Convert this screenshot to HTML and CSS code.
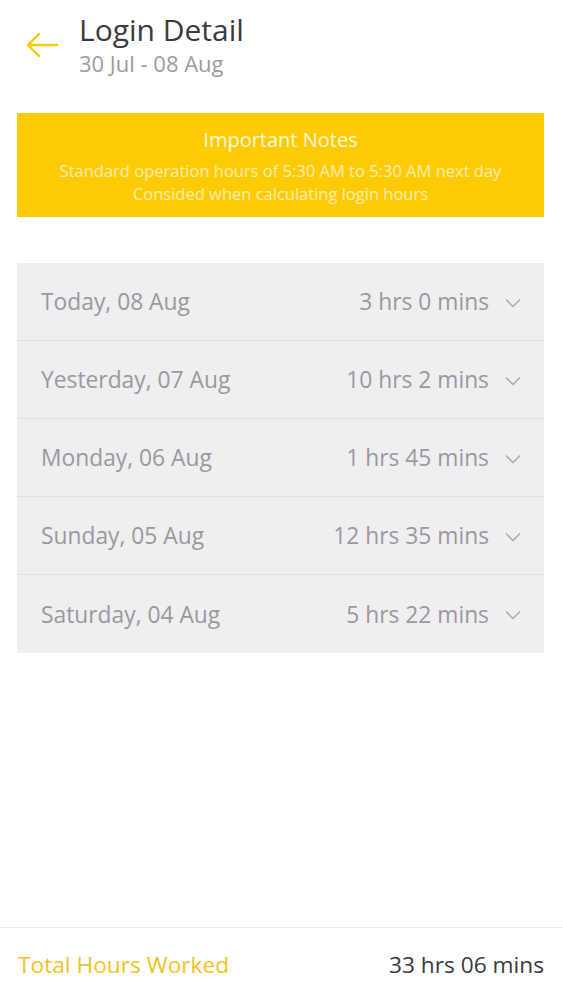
FILE: index.html
```html
<!DOCTYPE html>
<html>
<head>
<meta charset="utf-8">
<link rel="stylesheet" href="styles.css">
</head>
<body>
<div class="page">
  <header class="header">
    <svg class="back" width="32" height="26" viewBox="0 0 32 26">
      <path d="M31 13H2M13 2L2 13l11 11" fill="none" stroke="#f7c90e" stroke-width="2.4" stroke-linecap="round" stroke-linejoin="round"/>
    </svg>
    <div class="titles">
      <div class="title">Login Detail</div>
      <div class="subtitle">30 Jul - 08 Aug</div>
    </div>
  </header>

  <section class="notes">
    <div class="notes-title">Important Notes</div>
    <div class="notes-text">Standard operation hours of 5:30 AM to 5:30 AM next day</div>
    <div class="notes-text">Consided when calculating login hours</div>
  </section>

  <ul class="list">
    <li class="row"><span class="day">Today, 08 Aug</span><span class="hours">3 hrs 0 mins</span><svg class="chev" width="16" height="10" viewBox="0 0 16 10"><path d="M1 1.5l7 7 7-7" fill="none" stroke="#a8a7ab" stroke-width="1.4"/></svg></li>
    <li class="row"><span class="day">Yesterday, 07 Aug</span><span class="hours">10 hrs 2 mins</span><svg class="chev" width="16" height="10" viewBox="0 0 16 10"><path d="M1 1.5l7 7 7-7" fill="none" stroke="#a8a7ab" stroke-width="1.4"/></svg></li>
    <li class="row"><span class="day">Monday, 06 Aug</span><span class="hours">1 hrs 45 mins</span><svg class="chev" width="16" height="10" viewBox="0 0 16 10"><path d="M1 1.5l7 7 7-7" fill="none" stroke="#a8a7ab" stroke-width="1.4"/></svg></li>
    <li class="row"><span class="day">Sunday, 05 Aug</span><span class="hours">12 hrs 35 mins</span><svg class="chev" width="16" height="10" viewBox="0 0 16 10"><path d="M1 1.5l7 7 7-7" fill="none" stroke="#a8a7ab" stroke-width="1.4"/></svg></li>
    <li class="row"><span class="day">Saturday, 04 Aug</span><span class="hours">5 hrs 22 mins</span><svg class="chev" width="16" height="10" viewBox="0 0 16 10"><path d="M1 1.5l7 7 7-7" fill="none" stroke="#a8a7ab" stroke-width="1.4"/></svg></li>
  </ul>

  <footer class="footer">
    <span class="total-label">Total Hours Worked</span>
    <span class="total-value">33 hrs 06 mins</span>
  </footer>
</div>
</body>
</html>
```

FILE: styles.css
```css
* { box-sizing: border-box; }
html, body { margin: 0; padding: 0; background: #fff; }
body { font-family: "Open Sans", Lato, sans-serif; }
.page {
  width: 563px;
  height: 1000px;
  display: flex;
  flex-direction: column;
}
.header {
  display: flex;
  align-items: flex-start;
  padding: 11px 0 0 26px;
  height: 113px;
}
.back { margin-top: 21px; flex: none; }
.titles { margin-left: 21px; }
.title {
  font-size: 30px;
  line-height: 38px;
  color: #3b3b3d;
}
.subtitle {
  font-size: 22px;
  line-height: 28px;
  color: #9c9ba0;
}
.notes {
  margin: 0 19px 0 17px;
  height: 104px;
  background: #fdcb05;
  text-align: center;
  padding-top: 13px;
}
.notes-title {
  color: #fff6d8;
  font-size: 20px;
  line-height: 28px;
  margin-bottom: 5px;
}
.notes-text {
  color: #fdedb0;
  font-size: 16.5px;
  line-height: 23px;
}
.list {
  list-style: none;
  margin: 46px 19px 0 17px;
  padding: 0;
  background: #efeef0;
}
.row {
  display: flex;
  align-items: center;
  height: 78px;
  padding: 0 23px 0 24px;
  border-bottom: 1px solid #e0dfe2;
}
.row:last-child { border-bottom: none; }
.day {
  flex: 1;
  font-size: 22.8px;
  color: #9a999e;
}
.hours {
  font-size: 22.8px;
  color: #9a999e;
}
.chev { margin-left: 16px; margin-top: 2px; }
.footer {
  margin-top: auto;
  height: 73px;
  border-top: 1px solid #ececee;
  display: flex;
  align-items: center;
  justify-content: space-between;
  padding: 0 19px 0 18px;
}
.total-label {
  color: #f0c322;
  font-size: 22.7px;
}
.total-value {
  color: #3b3b3d;
  font-size: 22.7px;
}
```
